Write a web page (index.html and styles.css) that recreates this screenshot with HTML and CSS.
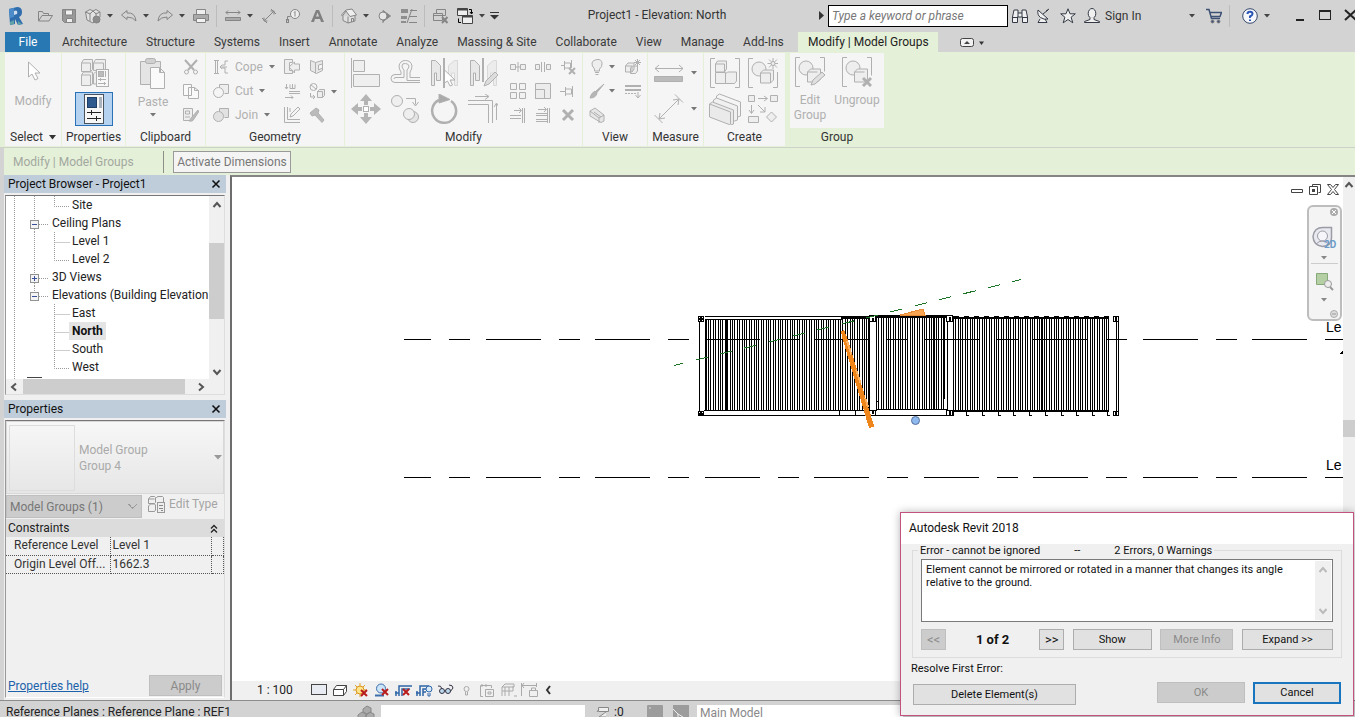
FILE: index.html
```
<!DOCTYPE html>
<html lang="en">
<head>
<meta charset="utf-8">
<title>Project1 - Elevation: North</title>
<link rel="stylesheet" href="styles.css">
</head>
<body>
<svg class="defs" aria-hidden="true">
  <defs>
    <symbol id="caret" viewBox="0 0 6 4"><path d="M0 0h6L3 3.5z" fill="currentColor"/></symbol>
    <symbol id="up" viewBox="0 0 10 10"><path d="M1.500 7L5 3l3.500 4" fill="none" stroke="currentColor" stroke-width="2"/></symbol>
    <symbol id="down" viewBox="0 0 10 10"><path d="M1.500 3L5 7l3.500-4" fill="none" stroke="currentColor" stroke-width="2"/></symbol>
    <symbol id="left" viewBox="0 0 10 10"><path d="M7 1.500L3 5l4 3.500" fill="none" stroke="currentColor" stroke-width="2"/></symbol>
    <symbol id="right" viewBox="0 0 10 10"><path d="M3 1.500L7 5 3 8.500" fill="none" stroke="currentColor" stroke-width="2"/></symbol>
    <symbol id="close" viewBox="0 0 10 10"><path d="M1.500 1.500l7 7m0-7l-7 7" stroke="currentColor" stroke-width="1.600"/></symbol>
    <symbol id="child" viewBox="0 0 66 18"><path d="M8.500 0v18M28.500 0v18M48.500 0v18M48.500 10.500h15" class="dots"/></symbol>
    <symbol id="last" viewBox="0 0 66 18"><path d="M8.500 0v18M28.500 0v18M48.500 0v10.500h15" class="dots"/></symbol>
    <symbol id="child2" viewBox="0 0 66 18"><path d="M8.500 0v18M48.500 0v18M48.500 10.500h15" class="dots"/></symbol>
    <symbol id="last2" viewBox="0 0 66 18"><path d="M8.500 0v18M48.500 0v10.500h15" class="dots"/></symbol>
    <symbol id="node" viewBox="0 0 46 18"><path d="M8.500 0v18M28.500 0v6M33 10.500h10" class="dots"/><rect x="24.500" y="6.500" width="8" height="8" fill="#f4f4f4" stroke="#919191"/><path d="M26 10.500h5" stroke="#3a4f9a"/></symbol>
  </defs>
</svg>

<header class="quick">
  <svg class="logo" width="16" height="20" viewBox="0 0 16 20"><path d="M1 3l8-2q5 0 5 5 0 4-3 5l4 7-5 1-3-6v5l-5 1z" fill="#2f6dac"/><path d="M6 5v4l3-1q1-3-1-3.500z" fill="#cfdcec"/><path d="M2 16l4-2v4l-4 1zM10 15l4 3-4 1z" fill="#5fa3a8"/><path d="M1 3l5-1v9l-4 1z" fill="#4b8bc9"/></svg>
  <button class="tool" aria-label="Open"><svg width="16" height="16"><path d="M1.500 13V3.500h4l1 2h5V8M1.500 13L5 7.500h10.500L12 13z"/></svg></button>
  <button class="tool" aria-label="Save"><svg width="16" height="16"><path d="M1.500 1.500h13v13h-11l-2-2z" fill="#999"/><path d="M4.500 2h7v5h-7z" fill="#f2f2f2"/><path d="M5.500 10.500h6v4h-6z" fill="#eee"/></svg></button>
  <button class="tool" aria-label="Synchronize"><svg width="16" height="16"><path d="M.5 4L5 1.500l3 1.500 3-1.500L15 4v5l-7 6-6-3zM.5 4L5 6l3-3 3 3 4-2M5 6v7M11 6v3" fill="#e2e2e2"/><circle cx="11.500" cy="11.500" r="3.500" fill="#8d8d8d"/></svg></button>
  <button class="drop" aria-label="Synchronize options"><svg><use href="#caret"/></svg></button>
  <button class="tool" aria-label="Undo"><svg width="16" height="16"><path d="M.5 7L6 2.500V5q8-1 9 8-3-4-9-4v2.500z"/></svg></button>
  <button class="drop" aria-label="Undo list"><svg><use href="#caret"/></svg></button>
  <button class="tool" aria-label="Redo"><svg width="16" height="16"><path d="M15.500 7L10 2.500V5q-8-1-9 8 3-4 9-4v2.500z"/></svg></button>
  <button class="drop" aria-label="Redo list"><svg><use href="#caret"/></svg></button>
  <button class="tool" aria-label="Print"><svg width="16" height="16"><path d="M3.500 6V1.500h9V6" fill="#eee"/><path d="M.5 6.500h15v6H.5z" fill="#aaa"/><path d="M3.500 10.500h9v4h-9z" fill="#f2f2f2"/></svg></button>
  <i class="rule"></i>
  <button class="tool" aria-label="Measure"><svg width="16" height="16"><path d="M1 4.500h14M3 2.500l-2 2 2 2M13 2.500l2 2-2 2"/><path d="M.5 9.500h15v3H.5z" fill="#aaa"/></svg></button>
  <button class="drop" aria-label="Measure options"><svg><use href="#caret"/></svg></button>
  <button class="tool" aria-label="Aligned dimension"><svg width="16" height="16"><path d="M3 13L13 3M1 10l5 5M10 1l5 5M3 9.500V13h3.500M9.500 3H13v3.500"/></svg></button>
  <button class="tool" aria-label="Tag"><svg width="16" height="16"><circle cx="10" cy="6" r="4.500" fill="#eee"/><path d="M10 3.500v5M9 4.500l1-1M5.500 8.500h-3v4"/><rect x="1.500" y="11.500" width="2" height="3"/></svg></button>
  <button class="tool" aria-label="Text"><svg width="16" height="16"><path d="M2 14L7 2h3l5 12h-3l-1-3H6l-1 3zM7 8.500h3L8.500 4.500z" fill="#808080" stroke="none"/></svg></button>
  <i class="rule"></i>
  <button class="tool" aria-label="3D view"><svg width="16" height="16"><path d="M2 8v4.500l5 2.500 7-2V7" fill="#e0e0e0"/><path d="M.5 7L5 2l6-1 4.500 6-6.500 1.500L5 3 1.500 8z" fill="#eee"/><path d="M7 15V8.500M10.500 14v-3.500h2v3"/></svg></button>
  <button class="drop" aria-label="3D options"><svg><use href="#caret"/></svg></button>
  <button class="tool" aria-label="Section"><svg width="16" height="16"><path d="M6 2.500L13.500 8 6 13.500z" fill="#888"/><circle cx="6" cy="8" r="4" fill="#e5e5e5"/><path d="M6 12v3"/></svg></button>
  <button class="tool" aria-label="Thin lines"><svg width="16" height="16"><path d="M0 1h7v4H0zM0 8h6v3H0zM0 13h5v2H0z" fill="#8e8e8e" stroke="none"/><path d="M6 15L11 1M9 2.500h7M8 8.500h8M8 14.500h8"/></svg></button>
  <i class="rule"></i>
  <button class="tool" aria-label="Close hidden windows"><svg width="16" height="16"><path d="M3.500 5V1.500h9v6H9M.5 5.500h9v7H.5zM.5 7.500h9" /><path d="M9 9l5.500 6M14.500 9L9 15" stroke-width="2"/></svg></button>
  <button class="tool" aria-label="Switch windows"><svg width="16" height="16"><g stroke="#444"><path d="M.5.500h10v7H.5zM5.500 7.500h10v8h-10z" fill="#eee"/><path d="M.5 1.500h10M5.500 8.500h10" stroke-width="2"/><path d="M12 1.500h2.500v4M13 4l1.500 2L16 4M4 14.500H1.500v-4" stroke="#000"/></g></svg></button>
  <button class="drop" aria-label="Window list"><svg><use href="#caret"/></svg></button>
  <button class="custom" aria-label="Customize"><svg width="9" height="8"><path d="M0 .500h9" stroke="#333"/><path d="M0 3h9L4.500 7.500z" fill="#333"/></svg></button>
  <h1 class="title">Project1 - Elevation: North</h1>
  <svg class="play" width="5" height="9"><path d="M0 0l5 4.500L0 9z" fill="#333"/></svg>
  <input class="search" type="search" placeholder="Type a keyword or phrase" aria-label="Search">
  <div class="info">
    <button class="tool dark" aria-label="Find"><svg width="16" height="16"><path d="M2 2h4v3h4V2h4l1.500 7v5.500h-5V9h-5v5.500h-5V9zM6 5v4M10 5v4M.5 9.500h5M10.500 9.500h5"/></svg></button>
    <button class="tool dark" aria-label="Communication"><svg width="16" height="16"><path d="M2 2q-1 5 2.500 7.500T12 11zM7 6l5-4M4 11l-2 3.500h9L9 11M10 3l3-2"/></svg></button>
    <button class="tool dark" aria-label="Favorites"><svg width="16" height="16"><path d="M8 .8l2 5h5.300l-4.200 3.400 1.700 5.600L8 11.500l-4.800 3.300 1.700-5.600L.7 5.800H6z"/></svg></button>
    <button class="tool dark" aria-label="Account"><svg width="16" height="16"><ellipse cx="8" cy="5.500" rx="3.800" ry="5"/><path d="M6 10v1.500l-5.500 2v1h15v-1l-5.500-2V10"/></svg></button>
  </div>
  <a class="signin" href="#">Sign In</a>
  <button class="drop" aria-label="Account menu"><svg><use href="#caret"/></svg></button>
  <button class="tool cart" aria-label="App store"><svg width="16" height="16"><path d="M0 1.500h3l2.500 9H14M4 4.500h11.500L14 8.500H5" stroke="#3d5174" stroke-width="1.500"/><circle cx="6.500" cy="13.500" r="1.500" fill="#3d5174"/><circle cx="12.500" cy="13.500" r="1.500" fill="#3d5174"/></svg></button>
  <i class="rule"></i>
  <button class="tool help" aria-label="Help"><svg width="16" height="16"><circle cx="8" cy="8" r="7.300" fill="#f5f7fb" stroke="#35476b"/><path d="M5.500 6Q5.500 3.800 8 3.800T10.500 6Q10.500 7.300 8 8.500v1.500M8 11.500v1.500" stroke="#2b55b5" stroke-width="2"/></svg></button>
  <button class="drop" aria-label="Help menu"><svg><use href="#caret"/></svg></button>
  <div class="window">
    <button class="tool" aria-label="Minimize"><svg width="16" height="16"><path d="M4 12h8" stroke="#222" stroke-width="2"/></svg></button>
    <button class="tool" aria-label="Maximize"><svg width="16" height="16"><rect x="2.500" y="2.500" width="11" height="9" fill="none" stroke="#222"/><path d="M2 3h12" stroke="#222" stroke-width="2"/></svg></button>
    <button class="tool" aria-label="Close"><svg width="16" height="16"><path d="M3 2l11 10M14 2L3 12" stroke="#222" stroke-width="2"/></svg></button>
  </div>
</header>

<nav class="tabs">
  <button class="file">File</button>
  <button>Architecture</button><button>Structure</button><button>Systems</button><button>Insert</button><button>Annotate</button><button>Analyze</button><button>Massing &amp; Site</button><button>Collaborate</button><button>View</button><button>Manage</button><button>Add-Ins</button>
  <button class="active">Modify | Model Groups</button>
  <button class="fold" aria-label="Minimize ribbon"><svg width="24" height="9"><rect x=".5" y=".5" width="13" height="8" rx="2" fill="#f2f2f2" stroke="#444"/><path d="M4 6h6L7 3z" fill="#444"/><path d="M19 3.500h5L21.500 7z" fill="#333"/></svg></button>
</nav>

<section class="ribbon">
  <div class="panel select">
    <div class="body center">
      <button class="big" disabled><svg width="30" height="30"><path d="M10.500 5v15l3.500-3 3 6 3-1.500-3-5.500h5z" fill="#fff"/></svg><span>Modify</span></button>
    </div>
    <h2>Select <svg class="sel" width="7" height="5"><path d="M0 0h7L3.500 4.500z" fill="#333"/></svg></h2>
  </div>
  <div class="panel props">
    <div class="body center">
      <button class="large" aria-label="Type properties" disabled><svg width="30" height="30" viewBox="0 0 30 30"><g fill="#eee"><path d="M2.500 5l2-3.500h9v10l-2 2h-9zM14.500 5l2-3.500h10v11h-12zM2.500 17l2-3h9v12l-2 1.500h-9zM14.500 16l2-2h10v12h-12z"/><path d="M2.500 5h9v8.500M14.500 5h10v8M2.500 17h9v10.500"/><rect x="17.500" y="11.500" width="12" height="17" fill="#f7f7f7"/><rect x="19.500" y="13.500" width="5" height="5" fill="#bbb"/><path d="M26.500 13v6M19 21.500h8M19 25.500h8M21.500 20v3M25.500 24v3"/></g></svg></button>
      <button class="on" aria-label="Properties"><svg width="22" height="30"><rect x="1.500" y=".5" width="19" height="29" fill="#f6f6f6" stroke="#4a525e"/><rect x="4.500" y="3.500" width="9" height="10" fill="#2d598f" stroke="#1f3e66"/><path d="M16 3h3v11h-3z" fill="#a9b2bd" stroke="none"/><path d="M4 18.500h14M4 24.500h14M8.500 16v5M13.500 22v5" stroke="#222"/></svg></button>
    </div>
    <h2>Properties</h2>
  </div>
  <div class="panel clip">
    <div class="body">
      <button class="big" disabled><svg width="30" height="34"><path d="M2.500 4.500h20v23h-20z" fill="#e4e4e4"/><rect x="7.500" y="1.500" width="10" height="5" rx="2" fill="#d0d0d0"/><path d="M12.500 10.500h9l5 5v16h-14zM21.500 10.500v5h5" fill="#fafafa"/></svg><span>Paste</span><svg class="c"><use href="#caret"/></svg></button>
      <div class="stack">
        <button aria-label="Cut" disabled><svg width="16" height="16"><path d="M2 1l9 10M14 1L5 11" stroke-width="2"/><circle cx="3.500" cy="13" r="2"/><circle cx="12.500" cy="13" r="2"/></svg></button>
        <button aria-label="Copy" disabled><svg width="16" height="16"><path d="M.5 1.500h8v11h-8zM5.500 4.500h6l4 3v8h-10zM11.500 4.500v3h4" fill="#fafafa"/></svg></button>
        <button aria-label="Match type" disabled><svg width="16" height="16"><path d="M.5 1.500h9v12h-9zM2.500 4h4v3h-4zM2 10h5" fill="#eee"/><path d="M15 3l-6 7-3 4q4 1 5-2l4.500-7z" fill="#bbb"/></svg></button>
      </div>
    </div>
    <h2>Clipboard</h2>
  </div>
  <div class="panel geom">
    <div class="body">
      <div class="stack wide">
        <button disabled><svg width="16" height="16"><path d="M1 1.500h5M1 14.500h5M2.500 2v12M4.500 2v12M15 2h-3v4H9m6 8h-3V9H9M7 8h7M9 6L7 8l2 2"/></svg><span>Cope</span><svg class="c"><use href="#caret"/></svg></button>
        <button disabled><svg width="16" height="16"><path d="M6.500 5V1.500h9v9h-4" fill="#eee"/><circle cx="5.500" cy="9.500" r="5" fill="#f5f5f5"/></svg><span>Cut</span><svg class="c"><use href="#caret"/></svg></button>
        <button disabled><svg width="16" height="16"><path d="M6.500 5V1.500h9v9h-4" fill="#e2e2e2"/><circle cx="5.500" cy="9.500" r="5" fill="#e2e2e2"/></svg><span>Join</span><svg class="c"><use href="#caret"/></svg></button>
      </div>
      <div class="stack">
        <button aria-label="Wall joins" disabled><svg width="16" height="16"><path d="M.5.500h8v3h-3v8h3v3h-8zM15.500 5v6h-5v3L5 8l5.500-5v2z" fill="#eee"/></svg></button>
        <button aria-label="Beam joins" disabled><svg width="16" height="16"><path d="M2.500 1v5M1 4l1.500 2L4 4M6 1.500v4h5v-4M8.500 1v4M5 8.500h11M5 10.500h11M1 14.500h8M7 12.500l2 2-2 2" /></svg></button>
        <button aria-label="Wall edit" disabled><svg width="16" height="16"><path d="M.5 0v15.500H16M3.500 0v12.500H16M6 10l1-3 7-7 2 2-7 7zM6 1v4" /></svg></button>
      </div>
      <div class="stack">
        <button aria-label="Split face" disabled><svg width="16" height="16"><path d="M1.500 1.500l5 2 7-2v10l-6 3-6-3zM6.500 3.500v11M9.500 6v5l4-2V5z" fill="#e8e8e8"/></svg></button>
        <button aria-label="Paint" disabled><svg width="16" height="16"><circle cx="4.500" cy="4" r="3.500"/><path d="M2 2l5 4M8.500 8.500l2-2h5v6l-2 2h-5zM8.500 8.500h5v6M1.500 10v4h4M4 12l2 2-2 2" fill="#eee"/></svg></button>
        <button aria-label="Demolish" disabled><svg width="16" height="16"><path d="M1 6l6-5 3 2-1 3 6 7-2 2.500L6 8 3 9z" fill="#bbb"/></svg></button>
      </div>
      <svg class="c mid"><use href="#caret"/></svg>
    </div>
    <h2>Geometry</h2>
  </div>
  <div class="panel modify">
    <div class="body">
      <div class="larges">
        <button aria-label="Align" disabled><svg width="30" height="30"><path d="M.5 0v30"/><path d="M2.500 2.500h11v11h-11zM2.500 16.500h26v12h-26z" fill="#efefef"/></svg></button>
        <button aria-label="Offset" disabled><svg width="30" height="30"><path d="M30 19.500H20V14q2-3 2-6-1-5.500-6.500-5.500T9 8q0 3 2 6v2.500H5q-4 0-4 4t4 4h25M30 22.500H17V12q2-2 2-4t-3.500-2.500T12 8q0 2 2 4v7.500H6q-2 0-2 1.500"/></svg></button>
        <button aria-label="Mirror pick axis" disabled><svg width="30" height="30"><path d="M2.500 2.500h4l5 5v15h-4V15h-2v12.500h-3z" fill="#e8e8e8"/><path d="M15 0v30" stroke-width="2"/><path d="M28.500 2.500h-3l-6 5v15h3V15h3v12.500h3z" fill="#ececec" stroke="#d8d8d8"/><path d="M15.500 12v13l3-2 2.500 5 2.500-1-2.500-5h5z" fill="#fff"/></svg></button>
        <button aria-label="Mirror draw axis" disabled><svg width="30" height="30"><path d="M2.500 2.500h4l5 5v15h-4V15h-2v12.500h-3z" fill="#e8e8e8"/><path d="M15 0v24" stroke-width="2"/><path d="M28.500 2.500h-3l-6 5v15h3V15h3v12.500h3z" fill="#ececec" stroke="#d8d8d8"/><path d="M16 28l2-5 9-9 3 3-9 9z" fill="#ddd"/></svg></button>
        <button aria-label="Move" disabled><svg width="30" height="30"><path d="M15 0l6 7h-4v4h-4V7H9zM15 30l6-7h-4v-4h-4v4H9zM0 15l7-6v4h4v4H7v4zM30 15l-7-6v4h-4v4h4v4z" fill="#b4b4b4" stroke="none"/><rect x="12.500" y="12.500" width="5" height="5" fill="#fff"/></svg></button>
        <button aria-label="Copy elements" disabled><svg width="30" height="30"><circle cx="7" cy="7" r="5.500" fill="#efefef"/><circle cx="23" cy="23" r="5.500" fill="#e4e4e4"/><circle cx="19" cy="20" r="5.500" fill="#efefef"/><path d="M16 4.500h9.500v6M22.500 8l3 4 3-4"/></svg></button>
        <button aria-label="Rotate" disabled><svg width="30" height="30"><path d="M10 6A12 12 0 1 0 22 7" fill="none" stroke-width="2.500"/><path d="M10 0v9l11-3.500z" fill="#aaa"/></svg></button>
        <button aria-label="Trim extend" disabled><svg width="30" height="30"><path d="M7 2.500h13M17 0l4 2.500-4 3M0 6.500h24.500V29M0 10.500h20.500V29M28.500 26V10M26 13l2.500-4 2.500 4"/></svg></button>
      </div>
      <div class="smalls">
        <button aria-label="Split element" disabled><svg width="16" height="16"><path d="M.5 5.500h5v5h-5zM10.500 5.500h5v5h-5zM8 3v10M5 8h6" fill="#eee"/></svg></button>
        <button aria-label="Split with gap" disabled><svg width="16" height="16"><path d="M.5 5.500h4v5h-4zM11.500 5.500h4v5h-4zM6.500 3v10M9.500 3v10" fill="#eee"/></svg></button>
        <button aria-label="Unpin" disabled><svg width="16" height="16"><path d="M1 6.500h3M4.500 2v9M4.500 4h6v5h-6M11.500 1v8"/><path d="M9 9l6 6M15 9l-6 6" stroke-width="2"/></svg></button>
        <button aria-label="Array" disabled><svg width="16" height="16"><path d="M.5.500h6v6h-6zM9.500.500h6v6h-6zM.5 9.500h6v6h-6zM9.500 9.500h6v6h-6z" fill="#f2f2f2"/></svg></button>
        <button aria-label="Scale" disabled><svg width="16" height="16"><path d="M.5.500h15v15H.5zM.5 6.500h9v9h-9z" fill="#ececec"/></svg></button>
        <button aria-label="Pin" disabled><svg width="16" height="16"><path d="M0 8.500h5M5.500 4v9M5.500 6h6v5h-6M12.500 3v11"/></svg></button>
        <button aria-label="Trim single" disabled><svg width="16" height="16"><path d="M4 3.500h7M9 1l2.500 2.500L9 6M0 8.500h11M0 11.500h11M12.500 1v15M14.500 1v15"/></svg></button>
        <button aria-label="Trim multiple" disabled><svg width="16" height="16"><path d="M3 2.500h8M9 0l2.500 2.500L9 5M1 6.500h11M1 8.500h11M1 12.500h11M1 14.500h11M12.500 1v15M14.500 1v15"/></svg></button>
        <button aria-label="Delete" disabled><svg width="16" height="16"><path d="M3 3l10 10M13 3L3 13" stroke-width="3"/></svg></button>
      </div>
    </div>
    <h2>Modify</h2>
  </div>
  <div class="panel view">
    <div class="body">
      <div class="stack">
        <button aria-label="Hide" disabled><svg width="16" height="16"><path d="M5.500 10Q2.500 7 3 4t5-3.500T13 4t-2.500 6v2h-5zM6 13.500h4M6.500 15.500h3" fill="#eee"/></svg></button>
        <button aria-label="Override" disabled><svg width="16" height="16"><path d="M15 1L7 8l1 1.500zM6 8q-4 2-5 7 6 0 7-5z" fill="#b5b5b5"/></svg></button>
        <button aria-label="Selection box" disabled><svg width="16" height="16"><path d="M1 4l5-3 9 7v6l-3 1.500L1 9zM1 4l9 7v5M10 11l5-3M5 5l7 5" fill="#e6e6e6"/></svg></button>
      </div>
      <div class="carets"><svg class="c"><use href="#caret"/></svg><svg class="c"><use href="#caret"/></svg></div>
      <div class="stack">
        <button aria-label="Displace" disabled><svg width="16" height="16"><path d="M.5 7L3 4h6v6l-2 3H.5zM.5 7H7v6M5.500 9l2-2h5v5l-2 2.500h-5zM12.500 0v7M9 3.500h7M10 1l5 5M15 1l-5 5" fill="#eee"/></svg></button>
        <button aria-label="Linework" disabled><svg width="16" height="16"><path d="M0 3h16M0 7h16" stroke-width="2"/><path d="M0 10.500h11" stroke-dasharray="2 1"/><path d="M13 9v5M10.500 12l2.500 3 2.500-3"/></svg></button>
      </div>
    </div>
    <h2>View</h2>
  </div>
  <div class="panel measure">
    <div class="body">
      <div class="larges">
        <button aria-label="Measure length" disabled><svg width="30" height="30"><path d="M1 10.500h28M5 7l-4 3.500L5 14M25 7l4 3.500-4 3.500"/><path d="M.5 18.500h28v5H.5z" fill="#bbb"/></svg></button>
        <svg class="c"><use href="#caret"/></svg>
        <button aria-label="Aligned" disabled><svg width="30" height="30"><path d="M5 25L25 5M.5 21l8 8M21 .5l8 8M6 19l-1 6 6-1M19 6l6-1-1 6"/></svg></button>
        <svg class="c"><use href="#caret"/></svg>
      </div>
    </div>
    <h2>Measure</h2>
  </div>
  <div class="panel create">
    <div class="body">
      <div class="larges">
        <button aria-label="Create assembly" disabled><svg width="30" height="30"><path d="M5 .5H.5v29H5M25 .500h4.500v29H25"/><path d="M5.500 6l2-3h9v8l-2 3h-9zM5.500 14.500h10v11h-10zM15.500 16l2-2h9v9l-2 2.500h-9zM5.500 6h9v8" fill="#eee"/></svg></button>
        <button aria-label="Create group" disabled><svg width="30" height="30"><path d="M5 .5H.5v29H5M29.500 14v15.500H25"/><circle cx="11" cy="11" r="7" fill="#eee"/><path d="M12.500 15l3-3h10v10l-3 3h-10zM12.500 15h10v10" fill="#eee"/><path d="M25 0v11M19.500 5.500h11M21 1.500l8 8M29 1.500l-8 8"/><circle cx="25" cy="5.500" r="2" fill="#eee"/></svg></button>
        <button aria-label="Create parts" disabled><svg width="32" height="32"><path d="M7.500 3l3-2 21 8v14l-3 1-21-9z" fill="#f5f5f5"/><path d="M4.500 7l3-2 21 8v14l-3 1-21-8z" fill="#f0f0f0"/><path d="M.5 11l3-2 21 8v14l-3 1-21-8zM.5 11l21 8v12" fill="#eaeaea"/></svg></button>
        <button aria-label="Create similar" disabled><svg width="30" height="30"><path d="M.5 1.500h6v6h-6zM22.500 1.500h7v6h-7zM.5 22.500h10v6H.5zM23.500 18l5 5-5 5-5-5z" fill="#eee"/><path d="M10 4.500h9M16 2l3.500 2.500L16 7M3.500 11v8M1 16l2.500 3.500L6 16M10 11l7 7M17 13v5h-5"/></svg></button>
      </div>
    </div>
    <h2>Create</h2>
  </div>
  <div class="panel group">
    <div class="body">
      <button class="big" disabled><svg width="30" height="30"><path d="M5 .5H.5v29H5M25 .500h4.500v14"/><circle cx="11" cy="11" r="7" fill="#eee"/><path d="M12.500 15l3-3h10v10l-3 3h-10zM12.500 15h10" fill="#eee"/><path d="M16 28l2-5 9-8 3 3-10 9z" fill="#e0e0e0"/></svg><span>Edit<br>Group</span></button>
      <button class="big" disabled><svg width="30" height="30"><path d="M5 .5H.5v29H5M25 .500h4.500v18"/><circle cx="11" cy="11" r="7" fill="#eee"/><path d="M12.500 15l3-3h10v10l-3 3h-10zM12.500 15h10" fill="#eee"/><path d="M21 21l8 8M29 21l-8 8" stroke-width="3"/></svg><span>Ungroup</span></button>
    </div>
    <h2>Group</h2>
  </div>
</section>

<div class="options">
  <span class="mode">Modify | Model Groups</span>
  <button class="activate">Activate Dimensions</button>
</div>

<main class="work">
  <aside class="side">
    <div class="dock"><h2>Project Browser - Project1</h2><button aria-label="Close browser"><svg width="10" height="10"><use href="#close"/></svg></button></div>
    <div class="browser">
      <div class="pane">
        <ul class="tree">
          <li><svg width="66" height="18"><use href="#last"/></svg><span>Site</span></li>
          <li><svg width="46" height="18"><use href="#node"/><path d="M28.500 15v3" class="dots"/></svg><span>Ceiling Plans</span></li>
          <li><svg width="66" height="18"><use href="#child"/></svg><span>Level 1</span></li>
          <li><svg width="66" height="18"><use href="#last"/></svg><span>Level 2</span></li>
          <li><svg width="46" height="18"><use href="#node"/><path d="M28.500 15v3" class="dots"/><path d="M28.500 8v5" stroke="#3a4f9a"/></svg><span>3D Views</span></li>
          <li><svg width="46" height="18"><use href="#node"/></svg><span>Elevations (Building Elevation</span></li>
          <li><svg width="66" height="18"><use href="#child2"/></svg><span>East</span></li>
          <li><svg width="66" height="18"><use href="#child2"/></svg><span class="now">North</span></li>
          <li><svg width="66" height="18"><use href="#child2"/></svg><span>South</span></li>
          <li><svg width="66" height="18"><use href="#last2"/></svg><span>West</span></li>
          <li><svg width="66" height="18"><path d="M8.500 0v5" class="dots"/><path d="M21 1.500h15" stroke="#444"/></svg></li>
        </ul>
        <div class="vbar"><svg width="10" height="10"><use href="#up"/></svg><i></i><svg width="10" height="10"><use href="#down"/></svg></div>
      </div>
      <div class="hbar"><svg width="10" height="10"><use href="#left"/></svg><i></i><svg width="10" height="10"><use href="#right"/></svg></div>
    </div>
    <div class="dock second"><h2>Properties</h2><button aria-label="Close properties"><svg width="10" height="10"><use href="#close"/></svg></button></div>
    <div class="sheet">
      <button class="type" disabled><i></i><span>Model Group<br>Group 4</span><svg width="8" height="5"><path d="M0 0h8L4 4.500z" fill="#999"/></svg></button>
      <div class="filter">
        <select aria-label="Category" disabled><option>Model Groups (1)</option></select>
        <button disabled><svg width="17" height="17"><path d="M.5 3l2-2.500h4l1 1v5l-1 1h-6zM8.500 2l1-1.500h5l1 1v5M.5 10l2-2h4l1 1v5l-1 1.500h-6zM.5 3h6" fill="none" stroke="#999"/><rect x="9.500" y="6.500" width="7" height="10" fill="#eee" stroke="#999"/><path d="M11 9.500h4M11 12.500h4M13 14.500h2" stroke="#888"/></svg>Edit Type</button>
      </div>
      <h3>Constraints <svg width="8" height="9"><path d="M1 4.500l3-3 3 3M1 8.500l3-3 3 3" fill="none" stroke="#222" stroke-width="1.300"/></svg></h3>
      <table>
        <tr><th scope="row">Reference Level</th><td>Level 1</td><td class="end"></td></tr>
        <tr><th scope="row">Origin Level Off...</th><td>1662.3</td><td class="end"></td></tr>
      </table>
      <div class="foot"><a href="#">Properties help</a><button disabled>Apply</button></div>
    </div>
  </aside>

  <section class="canvas">
    <div class="stage">
      <svg class="drawing" role="img" aria-label="North elevation">
        <defs>
          <pattern id="ribs" width="12" height="10" patternUnits="userSpaceOnUse"><path d="M.5 0v10M2.500 0v10M5.500 0v10M7.500 0v10M10.500 0v10" stroke="#000"/></pattern>
        </defs>
        <g transform="translate(-232 -177)" fill="none" stroke="#000" shape-rendering="crispEdges">
          <path d="M404 339.500h939M404 477.500h939" stroke-dasharray="55 18 21 15.500" stroke-dashoffset="28"/>
          <path d="M706 320h135v90H706zM841 318h28v92h-28zM876 318h68v91h-68zM954 318h154v93H954z" fill="url(#ribs)" stroke="none"/>
          <path d="M699.500 317v98M704.500 316.500h137M704.500 319.500h137M704 410.500h166M704 415.500h244"/>
          <path d="M705.500 319v92M725.500 319v92M869 318v97M933.500 318v91M1041.500 318v93M944 318v81" stroke-width="2"/>
          <path d="M841 318h29M876 317h70M954 318h155" stroke-width="2" />
          <path d="M869 315.500h84M876.500 320v91M947.500 320v92M953.500 316v100M876 409.500h71M839.500 411v4.500h31M855.500 411v4M841 316.500h29" />
          <path d="M876 401h2M876.500 400v10" />
          <path d="M954 316.500h155" stroke-dasharray="5 5"/>
          <path d="M953 411h156" stroke-width="2"/>
          <path d="M966.500 411v4h2M982.500 411v4h2M998.500 411v4h2M1013.500 411v4h2M1029.500 411v4h2M1045.500 411v4h2M1061.500 411v4h2M1076.500 411v4h2M1092.500 411v4h2M1107.500 411v4h2M1108.500 318v93M1116.500 317v99M1118.500 317v99"/>
          <g fill="#fff"><path d="M698.500 316.500h5v5h-5zM698.500 411.500h5v4h-5zM869.500 315.500h6v6h-6zM869.500 410.500h6v5h-6zM946.500 315.500h6v6h-6zM946.500 410.500h6v5h-6zM1113.500 316.500h5v5h-5zM1113.500 411.500h5v4h-5z"/><path d="M701 316v5M699 318.500h4M701 412v4M699 413.500h4M872.500 318v3M872.500 411v3M949.500 317v4M949.500 411v4M1116 316v5M1116 411v5" stroke-width="2"/></g>
          <path d="M900 315l23-6 2 6z" fill="#f9a655" stroke="#e98a35"/>
          <path d="M841 331l3-1 4 10 26 86-1 1-4 1-27-91z" fill="#ef861b" stroke="none"/>
          <path d="M847 341l21 66" stroke="#f9b060" stroke-width="2" stroke-dasharray="14 16"/>
          <path d="M674 365.500L1021 279.500" stroke="#1d7427" stroke-dasharray="12.500 12.600" stroke-dashoffset="3"/>
          <circle cx="915.500" cy="420.500" r="4" fill="#8db9ef" stroke="#56719a" shape-rendering="auto"/>
          <path d="M1341 353l2-2v2z" fill="#000"/>
          <g fill="#000" stroke="none" class="level"><text x="1326" y="332">Le</text><text x="1326" y="470">Le</text></g>
        </g>
      </svg>
      <div class="mdi">
        <button aria-label="Minimize view"><svg width="12" height="11"><path d="M.5 5.500h11v3H.5z" fill="#fff" stroke="#444"/></svg></button>
        <button aria-label="Restore view"><svg width="12" height="11"><path d="M3.500 2.500v-2h8v8h-2M.5 2.500h8v8h-8z" fill="#fff" stroke="#444"/><rect x="3" y="5" width="3" height="3" fill="#444"/></svg></button>
        <button aria-label="Close view"><svg width="12" height="11"><path d="M.5.500h3l2.500 3 2.500-3h3l-4 5 4 5h-3L6 7.500l-2.500 3h-3l4-5z" fill="#fff" stroke="#444"/></svg></button>
      </div>
      <div class="wheel">
        <svg width="31" height="112" viewBox="0 0 31 112" fill="none"><circle cx="25" cy="5" r="4" fill="#aaa"/><path d="M23 3l4 4m0-4l-4 4" stroke="#fff"/><path d="M14 20.500h8.500V31q0 8-9 8.500-9-1-9.500-10 1-9 10-9z" fill="#e9e9f0" stroke="#9a9ba5" stroke-width="1.500"/><circle cx="13.500" cy="29" r="5" fill="#f6f6fa" stroke="#9a9ba5"/><path d="M7 37q6-6 13 0" stroke="#9a9ba5"/><path d="M12 49h6l-3 3.500zM12 91h6l-3 3.500z" fill="#888"/><path d="M2 56.500h27" stroke="#ccc"/><path d="M7.500 66.500h11v11h-11z" fill="#b5cfa4" stroke="#87a878"/><circle cx="19" cy="77" r="3.500" fill="#eee" stroke="#999"/><path d="M21 80l3 3" stroke="#999" stroke-width="2"/><circle cx="25" cy="107" r="3.500" fill="#ddd" stroke="#aaa"/><path d="M23 107h4" stroke="#999"/><text x="15" y="41" class="two">2D</text></svg>
      </div>
    </div>
    <div class="viewbar">
      <span>1 : 100</span>
      <div class="viewtools">
        <svg width="17" height="16"><rect x=".5" y="2.500" width="15" height="10" fill="#e8ecf2" stroke="#444"/></svg>
        <svg width="17" height="16"><path d="M1.500 7.500l3-4h10v6l-3 4h-10zM1.500 7.500h10v6M11.500 7.500l3-4" fill="#fff" stroke="#444"/></svg>
        <svg width="17" height="16"><path d="M7 1v14M0 8h14M2 3l10 10M12 3L2 13" stroke="#e1a42b"/><circle cx="7" cy="8" r="4" fill="#ffe48a" stroke="#d99420"/><path d="M8 8l6 6m0-6l-6 6" stroke="#b91c1c" stroke-width="2"/></svg>
        <svg width="17" height="16"><circle cx="7" cy="6.500" r="4.500" fill="#cbe4f7" stroke="#3c6fae"/><path d="M1 13.500h9" stroke="#3c6fae" stroke-width="2"/><path d="M8 7l6 6m0-6l-6 6" stroke="#b91c1c" stroke-width="2"/></svg>
        <svg width="17" height="16"><path d="M4 14V4h13M7 14V7h8M4 11H0M1 9v5" fill="none" stroke="#2f65a8" stroke-width="1.500"/><path d="M8 7l6 6m0-6l-6 6" stroke="#b91c1c" stroke-width="2"/></svg>
        <svg width="17" height="16"><path d="M4 14V4h9M7 14V7h3M4 11H0M1 9v5M7 10h3" fill="none" stroke="#2f65a8" stroke-width="1.500"/><circle cx="13" cy="7" r="3" fill="#d7eafa" stroke="#2f65a8"/><path d="M12 11v3h2v-3" stroke="#2f65a8" fill="none"/></svg>
        <svg width="17" height="16"><path d="M1 4q3-1 4 3M12 3q4 0 4 3l-3 4" fill="none" stroke="#334"/><circle cx="5" cy="9" r="2.500" fill="#bdd9ec" stroke="#334"/><circle cx="11" cy="9" r="2.500" fill="#bdd9ec" stroke="#334"/></svg>
        <svg width="17" height="16"><circle cx="8.500" cy="7" r="2.500" fill="none" stroke="#aaa"/><path d="M7.500 10v3h2v-3" fill="none" stroke="#aaa"/></svg>
        <svg width="17" height="16"><path d="M4 14.500H1.500v-11h11V6M3 2v3M7 2v3M6.500 7.500h8v7h-8zM9 10h3v2H9z" fill="none" stroke="#aaa"/></svg>
        <svg width="17" height="16"><path d="M2 14V5l3-3h9v3H2M5 14V5M9 14V5M2 9h11V4M14 14h3" fill="none" stroke="#aaa"/></svg>
        <svg width="17" height="16"><path d="M.5 1v13M0 3.500h15M15.500 1v4M3 1l-2 2.500L3 6M8.500 8.500h8v6h-8zM10.500 8V6h4v2" fill="none" stroke="#aaa"/></svg>
        <svg width="17" height="16"><path d="M8 4L5 8l3 4" fill="none" stroke="#333" stroke-width="2"/></svg>
      </div>
    </div>
  </section>
  <div class="rail"><svg width="10" height="10"><use href="#up"/></svg><i></i></div>
</main>

<footer class="status">
  <span class="msg">Reference Planes : Reference Plane : REF1</span>
  <svg class="sets" width="18" height="16"><path d="M6 4l4-3 4 2v4l-4 2-4-2zM1 10l4-3 4 2v4l-4 2-4-2zM9 10l4-3 4 2v4l-4 2-4-2z" fill="#aaa" stroke="#888"/></svg>
  <select class="worksets" aria-label="Workset"><option></option></select>
  <svg class="req" width="14" height="16"><path d="M2.500 2.500h10v4h-10zM10 7l-7 5h7M3 4L1 7" fill="#eee" stroke="#888"/></svg>
  <span class="count">:0</span>
  <svg width="16" height="16"><rect width="16" height="16" rx="1" fill="#9c9c9c"/><path d="M2 3h2" stroke="#ddd"/></svg>
  <svg class="opt" width="16" height="16"><rect width="16" height="16" fill="#9c9c9c"/><path d="M0 4l5 5v7M5 9l5 3" stroke="#eee" fill="none"/></svg>
  <select class="model" aria-label="Design option"><option>Main Model</option></select>
</footer>

<div class="dialog" role="dialog" aria-labelledby="dlg">
  <h2 id="dlg">Autodesk Revit 2018</h2>
  <div class="inner">
    <fieldset>
      <legend><span>Error - cannot be ignored</span><span>--</span><span>2 Errors, 0 Warnings</span></legend>
      <div class="message">
        <textarea aria-label="Error message" readonly>Element cannot be mirrored or rotated in a manner that changes its angle relative to the ground.</textarea>
        <div class="mbar"><svg width="10" height="10"><use href="#up"/></svg><svg width="10" height="10"><use href="#down"/></svg></div>
      </div>
      <div class="actions">
        <button class="step" disabled>&lt;&lt;</button>
        <b>1 of 2</b>
        <button class="step">&gt;&gt;</button>
        <button class="show">Show</button>
        <button class="more" disabled>More Info</button>
        <button class="expand">Expand &gt;&gt;</button>
      </div>
    </fieldset>
    <p>Resolve First Error:</p>
    <div class="final">
      <button class="delete">Delete Element(s)</button>
      <button class="ok" disabled>OK</button>
      <button class="cancel">Cancel</button>
    </div>
  </div>
</div>
</body>
</html>
```
FILE: styles.css
```
* { box-sizing: border-box; }
body {
  margin: 0; height: 100vh; overflow: hidden; position: relative;
  display: flex; flex-direction: column;
  background: #d3d3d3; color: #333;
  font: 12px/16px Roboto, "Open Sans", sans-serif;
}
h1, h2, h3, p { margin: 0; font-size: 12px; font-weight: 400; }
button, input, select, textarea { font: inherit; color: inherit; margin: 0; padding: 0; }
button { border: 0; background: none; display: flex; align-items: center; justify-content: center; flex: none; }
svg { flex: none; display: block; }
.defs { position: absolute; width: 0; height: 0; }
.dots { fill: none; stroke: #9a9a9a; stroke-dasharray: 1 1; }

.quick { flex: none; height: 31px; display: flex; align-items: center; gap: 8px; padding-left: 8px; overflow: hidden; }
.logo { margin-right: 5px; }
.tool { width: 16px; height: 16px; }
.tool svg { fill: none; stroke: #858585; }
.tool.dark svg { fill: #f0f0f0; stroke: #333a45; }
.drop { width: 6px; height: 16px; margin-left: -2px; color: #444; }
.drop svg { width: 6px; height: 4px; }
.rule { flex: none; width: 1px; height: 22px; background: #bcbcbc; margin-left: -1px; }
.custom { width: 9px; margin-left: -3px; }
.title { flex: 1; text-align: center; white-space: nowrap; padding-right: 4px; padding-bottom: 2px; }
.play { margin-right: -4px; }
.search { width: 180px; height: 22px; border: 1px solid #000; background: #fff; padding: 0 3px; font-style: italic; margin-right: -4px; }
.search::placeholder { color: #777; }
.info { display: flex; gap: 8px; }
.signin { color: #333; text-decoration: none; width: 78px; margin-left: -3px; }
.cart { margin-left: 3px; }
.help { margin-left: 4px; }
.window { display: flex; gap: 9px; margin-left: 14px; margin-right: -3px; }

.tabs { flex: none; height: 21px; display: flex; padding: 1px 0 0 5px; }
.tabs button { padding: 0 9px 0 10px; white-space: nowrap; color: #3a3a3a; }
.tabs .file { width: 45px; background: #2878b4; color: #fff; margin-right: 2px; }
.tabs .active { background: #e5f0d8; color: #222; width: 140px; margin-left: 5px; }
.tabs .fold { padding: 0 22px; }

.ribbon { flex: none; height: 96px; background: #e5f0d8; border-bottom: 1px solid #cdd2c8; padding: 1px 5px 0; display: flex; }
.panel { flex: none; background: #f5f5f5; border-right: 1px solid #e5f0d8; display: flex; flex-direction: column; height: 93px; color: #b0b0b0; }
.panel h2 { height: 18px; line-height: 18px; color: #333; display: flex; justify-content: center; align-items: center; gap: 6px; }
.panel svg { stroke: #b0b0b0; fill: none; }
.panel svg.c, .panel svg.sel { stroke: none; }
.panel button { color: #b0b0b0; }
.body { height: 75px; display: flex; padding-top: 2px; }
.body.center { flex-direction: column; align-items: center; padding-top: 4px; }
.big { flex-direction: column; justify-content: flex-start; }
.panel .c { width: 6px; height: 4px; color: #777; }
.stack { display: flex; flex-direction: column; }
.stack button { height: 24px; width: 16px; }
.larges { display: grid; height: 72px; }
.larges button { height: 36px; }
.select { width: 57px; }
.select .big { gap: 6px; }
.props { width: 64px; }
.large { height: 32px; }
.on { width: 38px; height: 34px; background: #b5d3f0; border: 1px solid #2a72b8; margin-top: 3px; flex: none; }
.clip { width: 80px; }
.clip .body { padding-left: 12px; justify-content: space-between; padding-right: 6px; }
.clip .big { width: 30px; gap: 3px; padding-top: 2px; }
.geom { width: 139px; }
.geom .body { padding-left: 7px; }
.stack.wide { width: 70px; }
.stack.wide button { width: auto; justify-content: flex-start; gap: 6px; }
.stack + .stack { margin-left: 9px; }
.stack.wide + .stack { margin-left: 1px; }
.mid { align-self: center; margin-left: 6px; }
.modify { width: 238px; }
.modify .body { padding-left: 1px; }
.modify .larges { grid-template-columns: repeat(4, 39px); justify-items: center; }
.smalls { display: grid; grid-template-columns: repeat(3, 25px); grid-auto-rows: 24px; justify-items: center; margin-left: 3px; }
.view { width: 65px; }
.view .body { padding-left: 6px; }
.carets { display: flex; flex-direction: column; gap: 20px; padding: 10px 10px 0 4px; }
.measure { width: 56px; }
.measure .body { padding-left: 6px; }
.measure .larges { grid-template-columns: 30px 20px; align-items: center; justify-items: center; }
.create { width: 82px; margin-right: 3px; }
.create .body { padding-left: 2px; }
.create .larges { grid-template-columns: repeat(2, 38px); justify-items: center; }
.group { width: 96px; border-left: 1px solid #e5f0d8; }
.group .body { padding: 4px 4px 0 2px; justify-content: space-between; }
.group .big { width: 46px; gap: 3px; line-height: 15px; padding-top: 0; }
.group .big:first-child { width: 36px; }
.group .big span { padding-top: 3px; }
.group h2 { background: #e5f0d8; }

.options { flex: none; height: 27px; background: #e5f0d8; display: flex; align-items: center; border-left: 4px solid #d3d3d3; padding-left: 9px; gap: 9px; }
.mode { color: #a2a8a0; width: 151px; height: 22px; line-height: 22px; border-right: 1px solid #8c8f88; }
.activate { width: 118px; height: 22px; border: 1px solid #999; background: #f4f4f4; color: #777; }

.work { flex: 1; min-height: 0; display: flex; background: #f0f0f0; border-left: 4px solid #d3d3d3; }
.side { width: 226px; flex: none; display: flex; flex-direction: column; padding-right: 4px; }
.dock { flex: none; height: 18px; background: #bfcddb; color: #111; display: flex; align-items: center; justify-content: space-between; padding: 0 5px 0 4px; }
.browser { flex: none; height: 200px; margin-top: 2px; border: 1px solid #999; border-top-color: #777; border-right-color: #ddd; border-bottom-color: #ddd; margin-left: 1px; margin-right: 1px; background: #fff; display: flex; flex-direction: column; }
.pane { flex: 1; min-height: 0; display: flex; }
.tree { flex: 1; min-width: 0; margin: 0; padding: 0; list-style: none; overflow: hidden; color: #222; }
.tree li { display: flex; height: 18px; line-height: 18px; white-space: nowrap; }
.tree .now { font-weight: 700; background: #e4e4e4; padding: 0 3px; margin-left: -3px; color: #111; }
.vbar, .mbar { width: 16px; flex: none; background: #f0f0f0; display: flex; flex-direction: column; justify-content: space-between; align-items: center; padding: 4px 0; color: #555; }
.vbar { width: 15px; padding: 4px 0 2px; }
.vbar i { width: 15px; height: 76px; background: #cdcdcd; margin-bottom: 20px; margin-top: 4px; }
.hbar { flex: none; height: 15px; background: #f0f0f0; display: flex; align-items: center; padding: 0 18px 0 3px; gap: 4px; color: #555; }
.hbar i { flex: 1; height: 15px; background: #cdcdcd; margin-right: 7px; }
.dock.second { margin-top: 5px; }
.sheet { flex: 1; min-height: 0; margin: 2px 1px 2px; border: 1px solid #999; border-top-color: #777; border-right-color: #ddd; border-bottom-color: #fff; display: flex; flex-direction: column; }
.type { height: 73px; background: linear-gradient(#f7f7f7, #e6e6e6); border: 1px solid #d8d8d8; justify-content: flex-start; text-align: left; padding: 2px 1px 2px 2px; color: #aaa; }
.type i { width: 66px; height: 66px; border: 1px solid #ddd; margin-right: 4px; }
.type span { flex: 1; }
.filter { flex: none; display: flex; height: 25px; align-items: flex-start; gap: 6px; }
.filter select { appearance: none; width: 136px; height: 23px; margin-top: 1px; border: 1px solid #bfbfbf; border-radius: 0; color: #777; padding: 0 3px; opacity: 1; background-color: #ccc; background-image: linear-gradient(45deg, transparent 45%, #999 45%, #999 60%, transparent 60%), linear-gradient(-45deg, transparent 45%, #999 45%, #999 60%, transparent 60%); background-size: 5px 5px; background-repeat: no-repeat; background-position: right 8px center, right 4px center; }
.filter button { gap: 4px; color: #a5a5a5; height: 20px; }
.sheet h3 { flex: none; height: 18px; line-height: 18px; background: #dcdcdc; color: #222; display: flex; align-items: center; justify-content: space-between; padding: 0 6px 0 2px; }
.sheet table { border-collapse: collapse; table-layout: fixed; width: 100%; }
.sheet th, .sheet td { font-weight: 400; text-align: left; height: 18px; line-height: 16px; padding: 0 2px 1px; border-bottom: 1px dotted #555; border-right: 1px dotted #555; white-space: nowrap; }
.sheet th { width: 104px; padding-left: 8px; padding-right: 0; }
.sheet .end { width: 12px; }
.foot { margin-top: auto; display: flex; justify-content: space-between; align-items: center; padding: 0 2px 1px; }
.foot a { color: #1c62ab; }
.foot button { width: 73px; height: 21px; background: #ccc; border: 1px solid #bfbfbf; color: #8a8a8a; }

.canvas { flex: 1; min-width: 0; display: flex; flex-direction: column; border-left: 2px solid #6d6d6d; border-top: 2px solid #858585; }
.stage { flex: 1; min-height: 0; position: relative; background: #fff; }
.drawing { position: absolute; inset: 0; width: 100%; height: 100%; }
.level { font: 14px "Liberation Sans", Arial, sans-serif; }
.mdi { position: absolute; top: 7px; right: 4px; display: flex; gap: 6px; }
.wheel { position: absolute; top: 28px; right: 1px; width: 35px; border: 2px solid #bdbdbd; border-radius: 6px; background: #f4f4f4; }
.two { font: 700 10px Roboto, sans-serif; fill: #6d9bc8; }
.viewbar { flex: none; height: 19px; display: flex; align-items: center; gap: 18px; padding: 0 0 2px 25px; color: #222; }
.viewtools { display: flex; gap: 4px; }
.rail { flex: none; width: 12px; border-top: 2px solid #858585; display: flex; flex-direction: column; align-items: center; padding-top: 3px; color: #555; }
.rail i { width: 12px; height: 17px; background: #cdcdcd; margin-top: 230px; }

.status { flex: none; height: 17px; border-top: 1px solid #8c8c8c; overflow: hidden; display: flex; align-items: flex-start; padding: 4px 0 0 6px; color: #222; }
.msg, .count { line-height: 14px; }
.msg { width: 351px; white-space: nowrap; }
.status select { appearance: none; border: 0; border-radius: 0; background: #fff; height: 16px; color: #888; padding: 0 3px; }
.sets { margin-right: 6px; }
.worksets { width: 204px; margin-right: 11px; }
.count { margin-left: 4px; width: 33px; }
.opt { margin-left: 10px; margin-right: 8px; }
.model { width: 206px; }

.dialog { position: absolute; right: 1px; bottom: 1px; width: 454px; border: 1px solid #c2527f; background: #f0f0f0; color: #111; box-shadow: 0 0 8px rgba(0, 0, 0, .3); font-size: 11px; line-height: 13px; }
.dialog h2 { height: 31px; line-height: 30px; padding-left: 8px; background: #fff; }
.inner { padding: 0 11px 10px; }
.dialog fieldset { margin: 0; padding: 2px 8px 7px; border: 1px solid #dcdcdc; min-width: 0; }
.dialog legend { display: flex; gap: 34px; padding: 0 2px; margin-left: -3px; }
.message { display: flex; border: 1px solid #7a7a7a; background: #fff; height: 63px; padding: 1px; }
.message textarea { flex: 1; min-width: 0; border: 0; outline: 0; resize: none; background: none; padding: 2px 3px; overflow: hidden; }
.mbar { color: #bbb; }
.actions { display: flex; align-items: center; justify-content: space-between; margin-top: 7px; }
.dialog button { height: 21px; border: 1px solid #adadad; background: #e1e1e1; }
.dialog button:disabled { background: #ccc; border-color: #bfbfbf; color: #8a8a8a; }
.actions b { font-size: 13px; width: 76px; text-align: center; }
.dialog .step { width: 25px; font-size: 13px; }
.dialog .show { width: 79px; }
.dialog .more { width: 73px; }
.dialog .expand { width: 91px; }
.dialog p { font-size: 11px; margin: 4px 0 0 -1px; }
.final { display: flex; align-items: center; gap: 8px; margin-top: 5px; padding-right: 1px; }
.dialog .delete { width: 163px; margin-left: 1px; margin-top: 4px; }
.dialog .ok { width: 88px; margin-left: auto; }
.dialog .cancel { width: 88px; border: 2px solid #1a75bf; height: 22px; }
```
